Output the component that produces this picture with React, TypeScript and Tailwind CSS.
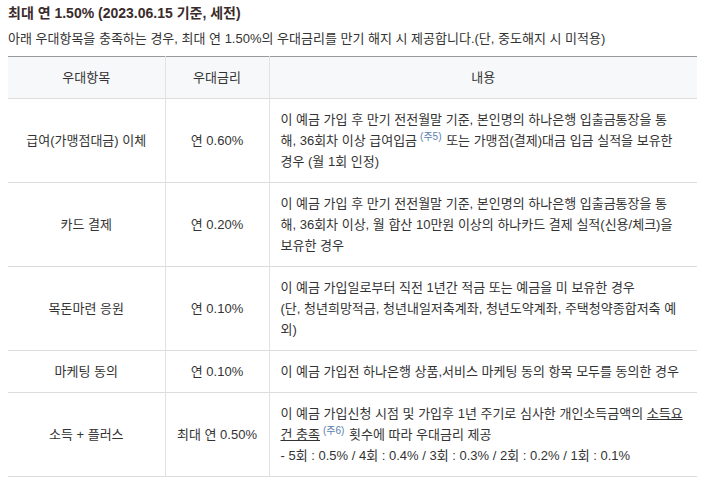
import React from "react";

const Sup = ({ n }: { n: string }) => (
  <span className="inline-block align-top text-[10px] leading-[14px] text-[#5a7fb0] ml-[3px] mr-[1px]">({n})</span>
);

const rows: { item: string; rate: string; body: React.ReactNode }[] = [
  {
    item: "급여(가맹점대금) 이체",
    rate: "연 0.60%",
    body: (
      <>
        이 예금 가입 후 만기 전전월말 기준, 본인명의 하나은행 입출금통장을 통
        <br />
        해, 36회차 이상 급여입금
        <Sup n="주5" /> 또는 가맹점(결제)대금 입금 실적을 보유한
        <br />
        경우 (월 1회 인정)
      </>
    ),
  },
  {
    item: "카드 결제",
    rate: "연 0.20%",
    body: (
      <>
        이 예금 가입 후 만기 전전월말 기준, 본인명의 하나은행 입출금통장을 통
        <br />
        해, 36회차 이상, 월 합산 10만원 이상의 하나카드 결제 실적(신용/체크)을
        <br />
        보유한 경우
      </>
    ),
  },
  {
    item: "목돈마련 응원",
    rate: "연 0.10%",
    body: (
      <>
        이 예금 가입일로부터 직전 1년간 적금 또는 예금을 미 보유한 경우
        <br />
        (단, 청년희망적금, 청년내일저축계좌, 청년도약계좌, 주택청약종합저축 예
        <br />
        외)
      </>
    ),
  },
  {
    item: "마케팅 동의",
    rate: "연 0.10%",
    body: <>이 예금 가입전 하나은행 상품,서비스 마케팅 동의 항목 모두를 동의한 경우</>,
  },
  {
    item: "소득 + 플러스",
    rate: "최대 연 0.50%",
    body: (
      <>
        이 예금 가입신청 시점 및 가입후 1년 주기로 심사한 개인소득금액의 <span className="underline">소득요</span>
        <br />
        <span className="underline">건 충족</span>
        <Sup n="주6" /> 횟수에 따라 우대금리 제공
        <br />- 5회 : 0.5% / 4회 : 0.4% / 3회 : 0.3% / 2회 : 0.2% / 1회 : 0.1%
      </>
    ),
  },
];

export default function App() {
  return (
    <div
      className="w-[703px] h-[479px] bg-white px-2 text-[#333] overflow-hidden"
      style={{ fontFamily: '"Liberation Sans", "Noto Sans CJK KR", sans-serif' }}
    >
      <div className="pt-[3px] text-[14px] font-bold leading-[20px] text-[#3b2c2c]">
        최대 연 1.50% (2023.06.15 기준, 세전)
      </div>
      <div className="mt-[6px] mb-[7px] text-[13px] leading-[20px] text-[#333]">
        아래 우대항목을 충족하는 경우, 최대 연 1.50%의 우대금리를 만기 해지 시 제공합니다.(단, 중도해지 시 미적용)
      </div>
      <table className="w-[689px] border-collapse table-fixed text-[13px] leading-[21px]">
        <colgroup>
          <col className="w-[157px]" />
          <col className="w-[104px]" />
          <col className="w-[428px]" />
        </colgroup>
        <thead>
          <tr className="bg-[#f7f8fa] border-t border-t-[#9a9a9a] border-b border-b-[#dcdcdc]">
            <th className="font-normal py-[10px] border-r border-r-[#e2e2e2]">우대항목</th>
            <th className="font-normal py-[10px] border-r border-r-[#e2e2e2]">우대금리</th>
            <th className="font-normal py-[10px]">내용</th>
          </tr>
        </thead>
        <tbody>
          {rows.map((r, i) => (
            <tr key={i} className="border-b border-b-[#dcdcdc]">
              <td className="text-center align-middle py-[10px] border-r border-r-[#e2e2e2]">{r.item}</td>
              <td className="text-center align-middle py-[10px] border-r border-r-[#e2e2e2]">{r.rate}</td>
              <td className="text-left align-middle py-[10px] pl-[11px] pr-[4px]">{r.body}</td>
            </tr>
          ))}
        </tbody>
      </table>
    </div>
  );
}
